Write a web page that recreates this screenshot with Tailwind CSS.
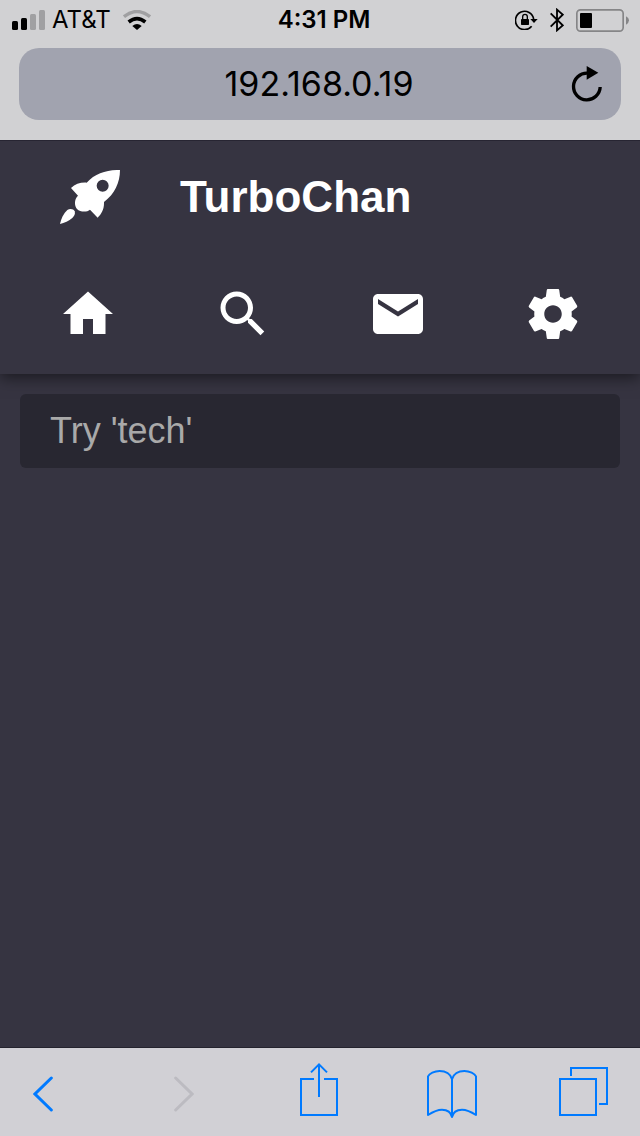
<!DOCTYPE html>
<html lang="en">
<head>
<meta charset="utf-8">
<meta name="viewport" content="width=device-width, initial-scale=1">
<title>TurboChan</title>
<script src="https://cdn.jsdelivr.net/npm/@tailwindcss/browser@4"></script>
</head>
<body class="flex min-h-screen flex-col bg-[#363441] font-['Liberation_Sans',Arial,sans-serif]">

<div class="relative z-10 border-b border-[#272532] bg-[#d1d1d3] pb-5 font-[Inter,sans-serif] text-black">
  <div class="flex h-10 items-center px-3 text-2xl leading-10">
    <div class="flex flex-1 items-center">
      <svg class="mr-[7px] h-5 w-[33px]" viewBox="0 0 33 20" aria-label="Signal">
        <rect x="0" y="11" width="6" height="9" rx="1.5"/>
        <rect x="9" y="8" width="6" height="12" rx="1.5"/>
        <rect x="18" y="4" width="6" height="16" rx="1.5" fill="#a0a0a2"/>
        <rect x="27" y="0" width="6" height="20" rx="1.5" fill="#a0a0a2"/>
      </svg>
      <span>AT&amp;T</span>
      <svg class="ml-3 h-5 w-7" viewBox="369 30 84 60" aria-label="Wi-Fi" fill="none">
        <path d="M372 50Q411 19 450 50" stroke="#a0a0a2" stroke-width="10"/>
        <path d="M386 66Q411 46 436 66" stroke="#000" stroke-width="11"/>
        <path d="M397 78Q411 66 425 78L411 90Z" fill="#000"/>
      </svg>
    </div>
    <span class="pl-2 font-semibold">4:31 PM</span>
    <div class="flex flex-1 items-center justify-end">
      <svg class="mr-3 h-5 w-[23px]" viewBox="75 30 69 60" aria-label="Rotation lock" fill="none">
        <path d="M131 57A27.500 27.500 0 1 0 125 79" stroke="#000" stroke-width="5"/>
        <path d="M121 57H143L132 69Z" fill="#000"/>
        <rect x="93" y="57" width="24" height="18" rx="2" fill="#000"/>
        <path d="M98 58V50Q98 43 105 43T112 50V58" stroke="#000" stroke-width="4"/>
      </svg>
      <svg class="mr-3 h-6 w-[14px]" viewBox="180 24 42 72" aria-label="Bluetooth" fill="none" stroke="#000" stroke-width="5.500">
        <path d="M182 40L218 76L201 91V29L218 44L182 80"/>
      </svg>
      <svg class="-mr-px h-[23px] w-[53px]" viewBox="258 27 159 69" aria-label="Battery">
        <rect x="260.500" y="29.500" width="139" height="64" rx="11" fill="none" stroke="#858587" stroke-width="5"/>
        <rect x="270" y="39" width="36" height="45" rx="3"/>
        <path d="M408 49Q417 53 417 61T408 74Z" fill="#858587"/>
      </svg>
    </div>
  </div>
  <div class="mx-[19px] mt-2 flex h-[72px] items-center rounded-[20px] bg-[#a1a3af] pr-[18px] pl-12">
    <span class="flex-1 text-center text-[34px] leading-10">192.168.0.19</span>
    <button type="button" aria-label="Reload">
      <svg class="block h-9 w-8" viewBox="244 198 96 108" fill="none">
        <path d="M293 219.500A40 40 0 1 0 331.500 261" stroke="#000" stroke-width="10"/>
        <path d="M291 198L326 218L291 239Z" fill="#000"/>
      </svg>
    </button>
  </div>
</div>

<header class="h-[233px] shadow-[0_4px_14px_rgba(0,0,0,0.5)]">
  <div class="flex h-[111px] items-center pl-[60px]">
    <svg class="h-[54px] w-[60px] text-white" viewBox="60 60 180 162" fill="currentColor" aria-hidden="true">
      <path fill-rule="evenodd" d="M240 60C240 98 224 132 192 156C193 178 184 193 173 203L150 179C141 187 121 187 111 177C102 167 103 147 114 137L93 114C106 101 122 97 140 98C166 70 200 59 240 60ZM188 89A18 18 0 1 0 188 125A18 18 0 1 0 188 89Z"/>
      <path d="M60 222C63 207 70 191 82 180C90 175 101 177 104 184C107 192 102 199 97 204C87 213 73 219 60 222Z"/>
    </svg>
    <h1 class="ml-[60px] text-[44px] leading-[52px] font-bold text-white">TurboChan</h1>
  </div>
  <nav class="grid h-[124px] grid-cols-4 place-items-center px-[10px] text-white">
    <a href="#home" aria-label="Home"><svg class="block size-[60px]" viewBox="0 0 24 24" fill="currentColor"><path d="M10 20v-6h4v6h5v-8h3L12 3 2 12h3v8z"/></svg></a>
    <a href="#search" aria-label="Search"><svg class="block size-[60px]" viewBox="0 0 24 24" fill="currentColor"><path d="M15.500 14h-.79l-.28-.27C15.410 12.590 16 11.110 16 9.500 16 5.910 13.090 3 9.500 3S3 5.910 3 9.500 5.910 16 9.500 16c1.610 0 3.090-.59 4.230-1.570l.27.28v.79l5 4.990L20.490 19l-4.990-5zm-6 0C7.010 14 5 11.990 5 9.500S7.010 5 9.500 5 14 7.010 14 9.500 11.990 14 9.500 14z"/></svg></a>
    <a href="#messages" aria-label="Messages"><svg class="block size-[60px]" viewBox="0 0 24 24" fill="currentColor"><path d="M20 4H4c-1.100 0-1.990.9-1.990 2L2 18c0 1.100.9 2 2 2h16c1.100 0 2-.9 2-2V6c0-1.100-.9-2-2-2zm0 4l-8 5-8-5V6l8 5 8-5v2z"/></svg></a>
    <a href="#settings" aria-label="Settings"><svg class="block size-[60px]" viewBox="0 0 24 24" fill="currentColor"><path d="M19.430 12.980c.04-.32.070-.64.070-.98s-.03-.66-.07-.98l2.110-1.650c.19-.15.240-.42.120-.64l-2-3.460c-.12-.22-.39-.3-.61-.22l-2.490 1c-.52-.4-1.080-.73-1.690-.98l-.38-2.650C14.460 2.180 14.250 2 14 2h-4c-.25 0-.46.180-.49.420l-.38 2.650c-.61.250-1.170.59-1.690.98l-2.490-1c-.23-.09-.49 0-.61.220l-2 3.460c-.13.220-.07.490.120.640l2.110 1.650c-.04.320-.07.650-.07.980s.03.660.070.980l-2.110 1.650c-.19.150-.24.420-.12.640l2 3.460c.12.220.39.300.61.220l2.490-1c.52.400 1.080.73 1.690.98l.38 2.650c.03.240.24.420.49.420h4c.25 0 .46-.18.490-.42l.38-2.650c.61-.25 1.170-.59 1.690-.98l2.490 1c.23.090.49 0 .61-.22l2-3.460c.12-.22.070-.49-.12-.64l-2.110-1.650zM12 15.500c-1.930 0-3.500-1.570-3.500-3.500s1.570-3.500 3.500-3.500 3.500 1.570 3.500 3.500-1.570 3.500-3.500 3.500z"/></svg></a>
  </nav>
</header>

<main class="flex-1 p-5">
  <input type="text" aria-label="Search boards" placeholder="Try 'tech'" class="block h-[74px] w-full rounded-md bg-[#282731] px-[30px] text-4xl text-white placeholder:text-[#a9a9a9] outline-none">
</main>

<footer class="grid h-[89px] grid-cols-[141fr_125fr_128fr_131fr_50px] items-center border-t border-[#24232e] bg-[#d1d0d5] pr-8 pl-[33px] text-[#007aff]">
  <button type="button" aria-label="Back" class="justify-self-start"><svg class="block h-[60px] w-5" viewBox="99 66 60 180" fill="none" stroke="currentColor" stroke-width="9" stroke-linecap="round"><path d="M154 114L105 162L154 210"/></svg></button>
  <button type="button" aria-label="Forward" disabled class="justify-self-start text-[#bcbbc1]"><svg class="block h-[60px] w-5" viewBox="522 66 60 180" fill="none" stroke="currentColor" stroke-width="9" stroke-linecap="round"><path d="M527 114L576 162L527 210"/></svg></button>
  <button type="button" aria-label="Share" class="justify-self-start"><svg class="block h-[60px] w-10" viewBox="57 66 120 180" fill="none" stroke="currentColor" stroke-width="6"><path d="M102 117H63V225H171V117H132M117 171V73M93 97L117 73L141 97"/></svg></button>
  <button type="button" aria-label="Bookmarks" class="justify-self-start"><svg class="block h-[60px] w-[50px]" viewBox="441 66 150 180" fill="none" stroke="currentColor" stroke-width="6" stroke-linejoin="round"><path d="M516 115V231M516 118C512 102 497 93 479 93C463 93 448 101 444 109V225C456 217 469 209 486 209C502 209 513 217 516 231C519 217 530 209 546 209C563 209 576 217 588 225V109C584 101 569 93 553 93C535 93 520 102 516 118"/></svg></button>
  <button type="button" aria-label="Tabs" class="justify-self-start"><svg class="block h-[60px] w-[50px]" viewBox="834 66 150 180" fill="none" stroke="currentColor" stroke-width="6"><path d="M840 117H948V225H840ZM873 108V84H981V192H957"/></svg></button>
</footer>

</body>
</html>
